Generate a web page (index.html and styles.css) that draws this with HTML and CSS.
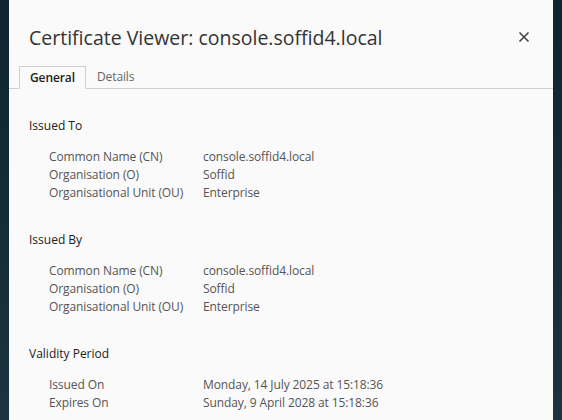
FILE: index.html
```html
<!DOCTYPE html>
<html lang="en">
<head>
    <meta charset="UTF-8">
    <title>Certificate Viewer</title>
    <link rel="stylesheet" href="styles.css">
</head>
<body>

<div class="topbar"></div>
<div class="backdrop">
    <div class="dialog">
        <div class="dialog-header">
            <h1 class="dialog-title">Certificate Viewer: console.soffid4.local</h1>
            <button class="close-btn" aria-label="Close">
                <svg width="12" height="12" viewBox="0 0 12 12">
                    <path d="M1.5 1.5 L10.5 10.5 M10.5 1.5 L1.5 10.5" stroke="#444" stroke-width="1.6" fill="none"/>
                </svg>
            </button>
        </div>

        <div class="tabs">
            <div class="tab active">General</div>
            <div class="tab">Details</div>
        </div>

        <div class="tab-content">
            <div class="section">
                <h2 class="section-title">Issued To</h2>
                <div class="fields">
                    <div class="field-name">Common Name (CN)</div>
                    <div class="field-value">console.soffid4.local</div>
                    <div class="field-name">Organisation (O)</div>
                    <div class="field-value">Soffid</div>
                    <div class="field-name">Organisational Unit (OU)</div>
                    <div class="field-value">Enterprise</div>
                </div>
            </div>

            <div class="section">
                <h2 class="section-title">Issued By</h2>
                <div class="fields">
                    <div class="field-name">Common Name (CN)</div>
                    <div class="field-value">console.soffid4.local</div>
                    <div class="field-name">Organisation (O)</div>
                    <div class="field-value">Soffid</div>
                    <div class="field-name">Organisational Unit (OU)</div>
                    <div class="field-value">Enterprise</div>
                </div>
            </div>

            <div class="section">
                <h2 class="section-title">Validity Period</h2>
                <div class="fields">
                    <div class="field-name">Issued On</div>
                    <div class="field-value">Monday, 14 July 2025 at 15:18:36</div>
                    <div class="field-name">Expires On</div>
                    <div class="field-value">Sunday, 9 April 2028 at 15:18:36</div>
                </div>
            </div>
        </div>
    </div>
</div>

</body>
</html>
```

FILE: styles.css
```css
html, body {
    margin: 0;
    height: 100%;
    overflow: hidden;
}
body {
    font-family: "Open Sans", "Noto Sans", sans-serif;
    background-color: #f3f3f3;
    display: flex;
    flex-direction: column;
}
.topbar {
    height: 10px;
    background-color: #f3f3f3;
}
.backdrop {
    flex: 1;
    background: linear-gradient(#0f2430, #1c3441);
    display: flex;
    justify-content: center;
    margin-top: -4px;
}
.dialog {
    width: 544px;
    margin: 0 8px;
    background-color: #fafafa;
    border-top: 1px solid #dedede;
    display: flex;
    flex-direction: column;
}
.dialog-header {
    display: flex;
    align-items: center;
    justify-content: space-between;
    padding: 23px 22px 0 20px;
    height: 34px;
}
.dialog-title {
    margin: 0;
    font-size: 19.5px;
    font-weight: 400;
    color: #333;
}
.close-btn {
    border: none;
    background: none;
    padding: 0;
    width: 14px;
    height: 14px;
    display: flex;
    align-items: center;
    justify-content: center;
    cursor: pointer;
}
.tabs {
    display: flex;
    margin-top: 12px;
    padding-left: 10px;
    border-bottom: 1px solid #cfcfcf;
    height: 22px;
    letter-spacing: -0.1px;
}
.tab {
    font-size: 12px;
    color: #666;
    padding: 0 11px;
    line-height: 22px;
}
.tab.active {
    font-weight: 600;
    color: #222;
    background-color: #fafafa;
    border: 1px solid #cfcfcf;
    border-bottom: 1px solid #fafafa;
    margin-bottom: -1px;
    line-height: 21px;
    padding: 0 10px;
}
.tab-content {
    padding: 28px 21px 0 20px;
}
.section {
    margin-bottom: 29px;
}
.section-title {
    margin: 0 0 13px 0;
    font-size: 12px;
    font-weight: 400;
    color: #222;
    line-height: 18px;
}
.fields {
    display: grid;
    grid-template-columns: 154px 1fr;
    padding-left: 20px;
    font-size: 12px;
    line-height: 18px;
    color: #555;
    letter-spacing: -0.1px;
}
```
